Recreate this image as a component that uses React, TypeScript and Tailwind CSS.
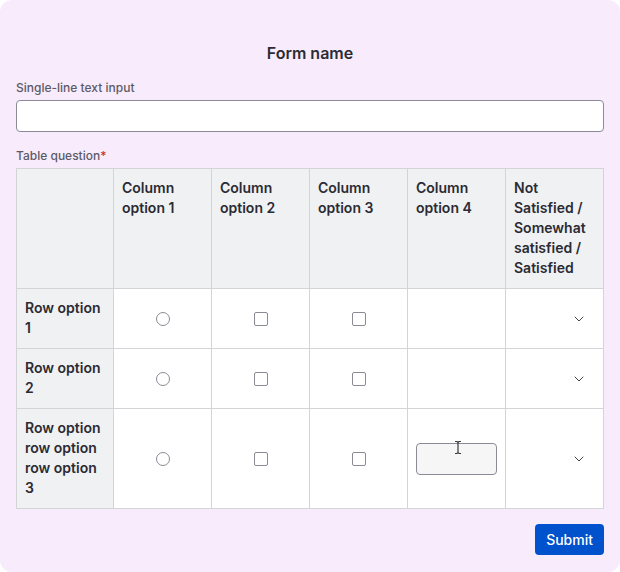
import React from 'react';
import { ChevronDown } from 'lucide-react';

const columns = ['Column option 1', 'Column option 2', 'Column option 3', 'Column option 4', 'Not Satisfied / Somewhat satisfied / Satisfied'];

const rows = [
  { id: 'r1', label: 'Row option 1', input: false },
  { id: 'r2', label: 'Row option 2', input: false },
  { id: 'r3', label: 'Row option row option row option 3', input: true },
];

const Radio = () => (
  <span className="mx-auto block h-[14px] w-[14px] rounded-full border border-[#8b8b95] bg-white" />
);

const Checkbox = () => (
  <span className="mx-auto block h-[14px] w-[14px] rounded-[2px] border border-[#8b8b95] bg-white" />
);

const TextCursor = () => (
  <svg width="8" height="15" viewBox="0 0 8 15" className="absolute left-[38px] top-[-3px]">
    <path d="M1 1.5h2l1 1 1-1h2M4 2.5v10M1 13.5h2l1-1 1 1h2" fill="none" stroke="#3a3a3a" strokeWidth="1.2" />
  </svg>
);

export default function App() {
  return (
    <div className="h-[572px] w-[620px] bg-white font-['Inter',sans-serif]">
      <div className="flex h-full flex-col rounded-xl bg-[#f8ebfc] px-4">
        <h1 className="pt-[41px] text-center text-base font-semibold leading-6 text-[#2b2b33]">Form name</h1>

        <label className="mt-[15px] block text-xs font-medium leading-4 text-[#5b5b66]">Single-line text input</label>
        <input type="text" className="mt-[4px] h-8 w-full rounded border border-[#8b8b98] bg-white" />

        <p className="mt-[16px] text-xs font-medium leading-4 text-[#5b5b66]">
          Table question<span className="text-[#c9372c]">*</span>
        </p>

        <table className="mt-[4px] w-full table-fixed border-collapse border border-[#d4d4d8] text-sm leading-5 text-[#2b2b33]">
          <colgroup>
            <col className="w-[97px]" />
            <col />
            <col />
            <col />
            <col />
            <col />
          </colgroup>
          <thead>
            <tr className="bg-[#f0f1f3]">
              <th className="h-[120px] border border-[#d4d4d8]" />
              {columns.map((c) => (
                <th key={c} className="border border-[#d4d4d8] px-2 py-[9px] text-left align-top font-semibold">
                  {c}
                </th>
              ))}
            </tr>
          </thead>
          <tbody>
            {rows.map((r) => (
              <tr key={r.id} className="bg-white">
                <td className={`border border-[#d4d4d8] bg-[#f0f1f3] px-2 pt-[8px] pb-[10px] font-semibold ${r.input ? 'h-[100px]' : 'h-[60px]'}`}>
                  {r.label}
                </td>
                <td className="border border-[#d4d4d8] align-middle"><Radio /></td>
                <td className="border border-[#d4d4d8] align-middle"><Checkbox /></td>
                <td className="border border-[#d4d4d8] align-middle"><Checkbox /></td>
                <td className="border border-[#d4d4d8] px-2 align-middle">
                  {r.input && (
                    <div className="relative">
                      <input type="text" className="h-8 w-full rounded border border-[#8b8b98] bg-[#f6f6f6]" />
                      <TextCursor />
                    </div>
                  )}
                </td>
                <td className="border border-[#d4d4d8] align-middle">
                  <div className="flex justify-end pr-[16px]">
                    <ChevronDown size={16} strokeWidth={1.5} className="text-[#44444c]" />
                  </div>
                </td>
              </tr>
            ))}
          </tbody>
        </table>

        <div className="mt-[15px] flex justify-end">
          <button className="h-[31px] rounded bg-[#0052cc] px-[11px] text-sm font-medium text-white">Submit</button>
        </div>
      </div>
    </div>
  );
}
